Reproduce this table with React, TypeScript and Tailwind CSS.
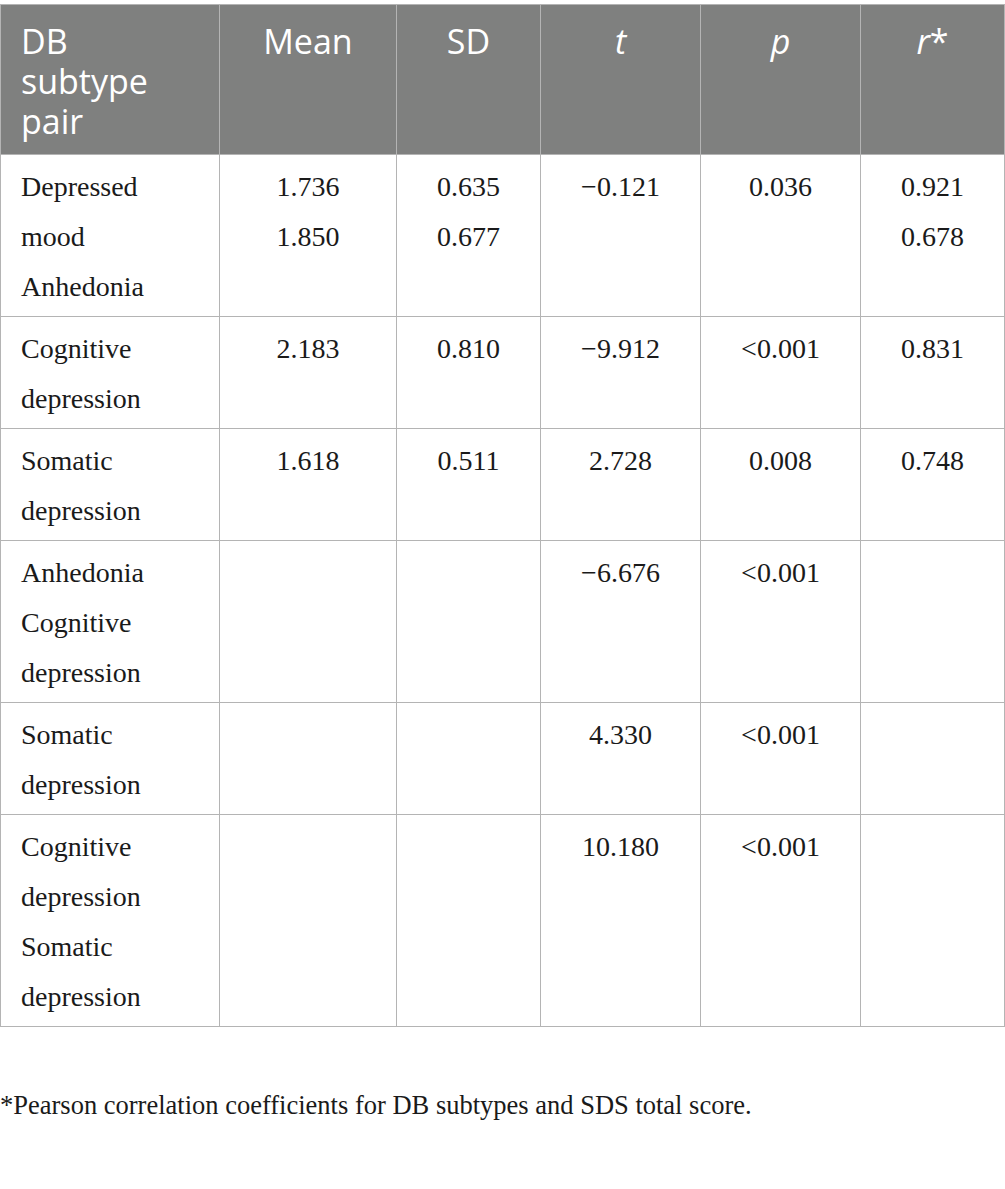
const rows = [
  { label: ['Depressed', 'mood', 'Anhedonia'], mean: ['1.736', '1.850'], sd: ['0.635', '0.677'], t: '\u22120.121', p: '0.036', r: ['0.921', '0.678'] },
  { label: ['Cognitive', 'depression'], mean: ['2.183'], sd: ['0.810'], t: '\u22129.912', p: '<0.001', r: ['0.831'] },
  { label: ['Somatic', 'depression'], mean: ['1.618'], sd: ['0.511'], t: '2.728', p: '0.008', r: ['0.748'] },
  { label: ['Anhedonia', 'Cognitive', 'depression'], mean: [], sd: [], t: '\u22126.676', p: '<0.001', r: [] },
  { label: ['Somatic', 'depression'], mean: [], sd: [], t: '4.330', p: '<0.001', r: [] },
  { label: ['Cognitive', 'depression', 'Somatic', 'depression'], mean: [], sd: [], t: '10.180', p: '<0.001', r: [] },
]

function Lines({ items }: { items: string[] }) {
  return (
    <>
      {items.map((s, i) => (
        <div key={i}>{s}</div>
      ))}
    </>
  )
}

export default function App() {
  const th = 'border border-[#b4b4b4] align-top pt-[16px] pb-[13px] font-normal text-white'
  const td = 'border border-[#b4b4b4] align-top pt-[7px] pb-[4px] text-center'
  return (
    <div className="w-[1005px] min-h-[1189px] bg-white pt-1">
      <table className="w-[1004px] table-fixed border-collapse">
        <colgroup>
          <col className="w-[219px]" />
          <col className="w-[177px]" />
          <col className="w-[144px]" />
          <col className="w-[160px]" />
          <col className="w-[160px]" />
          <col className="w-[144px]" />
        </colgroup>
        <thead className="bg-[#7f807f] text-[34px] leading-[40px] font-['Open_Sans',sans-serif]">
          <tr>
            <th className={`${th} text-left pl-5`}>
              DB
              <br />
              subtype
              <br />
              pair
            </th>
            <th className={`${th} text-center`}>Mean</th>
            <th className={`${th} text-center`}>SD</th>
            <th className={`${th} text-center italic`}>t</th>
            <th className={`${th} text-center italic`}>p</th>
            <th className={`${th} text-center`}>
              <span className="italic">r</span>*
            </th>
          </tr>
        </thead>
        <tbody className="text-[28px] leading-[50px] text-[#1a1a1a] font-['Liberation_Serif',serif]">
          {rows.map((r, i) => (
            <tr key={i}>
              <td className={`${td} text-left pl-5`}>
                <Lines items={r.label} />
              </td>
              <td className={td}>
                <Lines items={r.mean} />
              </td>
              <td className={td}>
                <Lines items={r.sd} />
              </td>
              <td className={td}>{r.t}</td>
              <td className={td}>{r.p}</td>
              <td className={td}>
                <Lines items={r.r} />
              </td>
            </tr>
          ))}
        </tbody>
      </table>
      <p className="mt-[62px] text-[26.5px] leading-[32px] text-[#1a1a1a] font-['Liberation_Serif',serif]">
        *Pearson correlation coefficients for DB subtypes and SDS total score.
      </p>
    </div>
  )
}
